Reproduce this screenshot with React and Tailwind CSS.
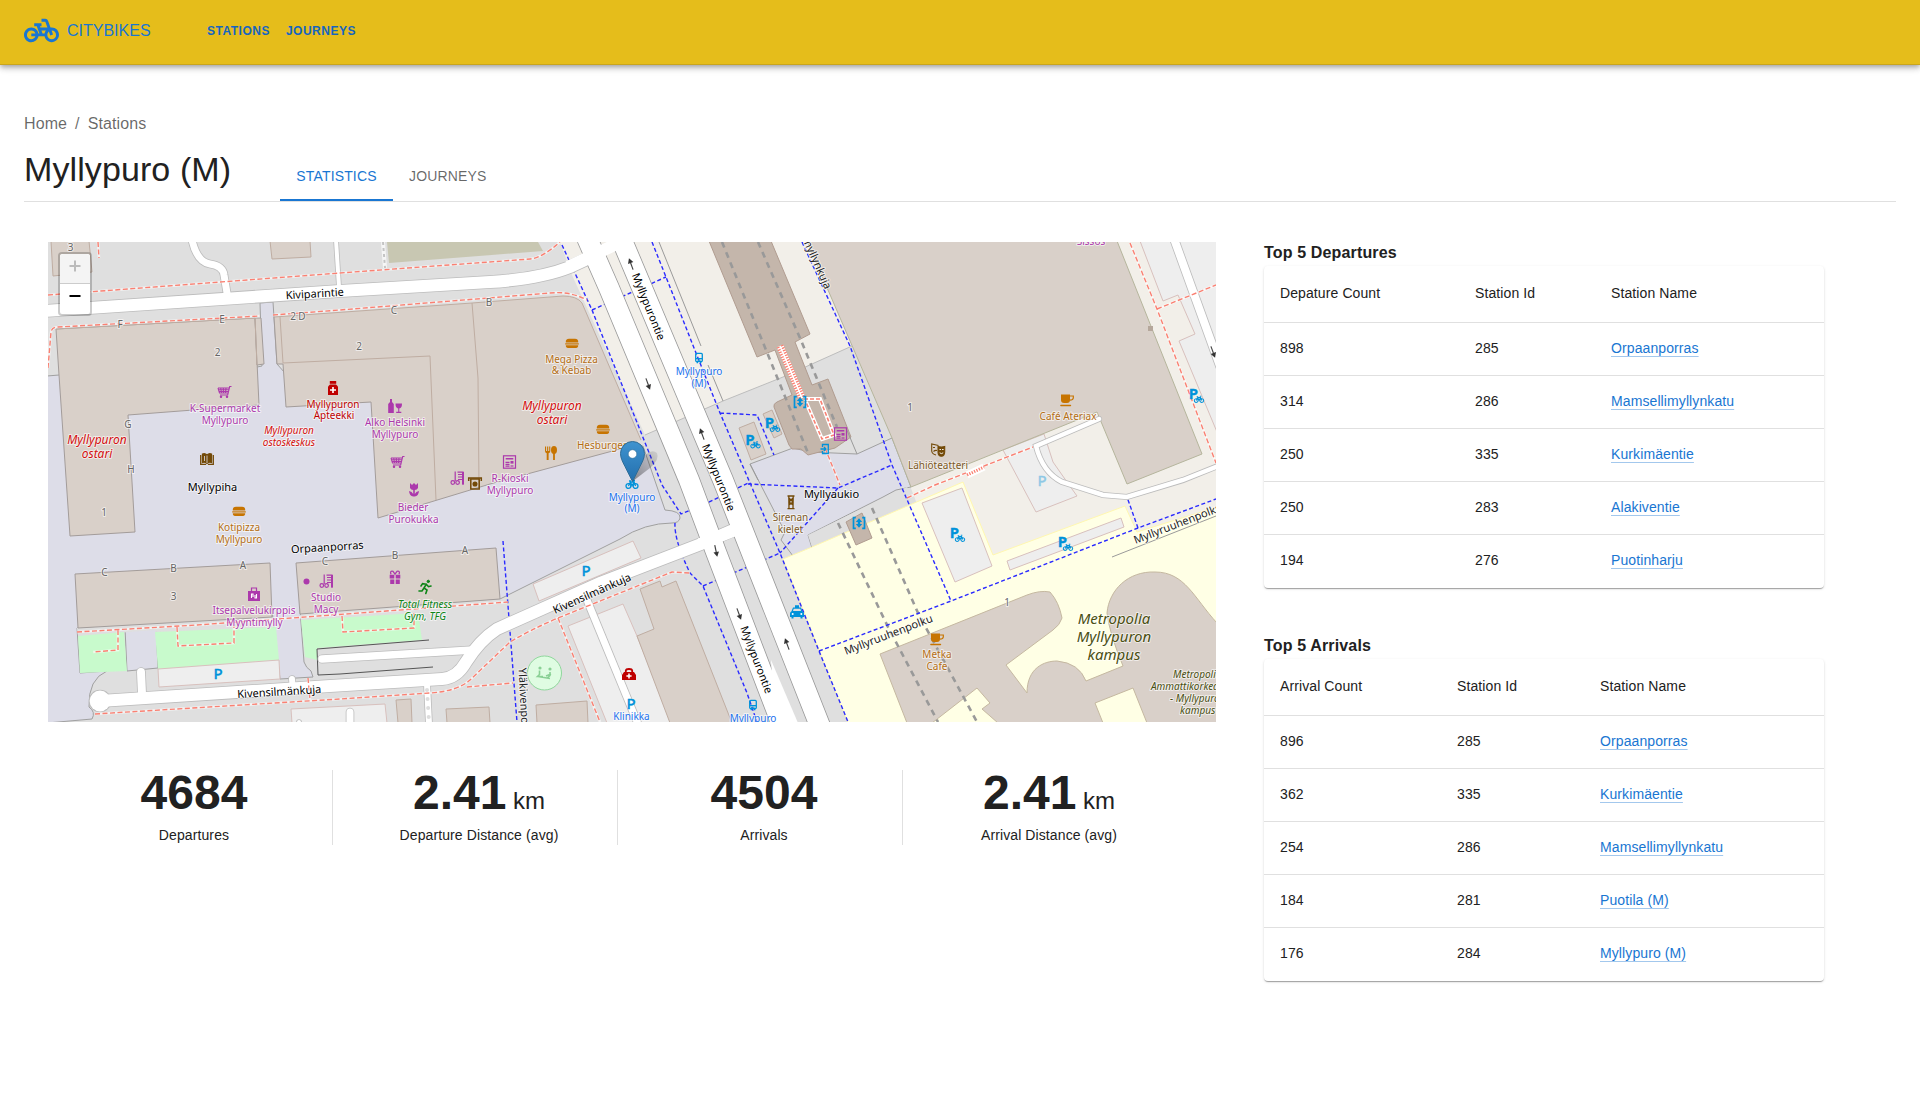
import React from "react";
import { MdPedalBike } from "react-icons/md";

const SHOP = "#ac39ac";
const FOOD = "#c77400";
const BROWN = "#734a08";
const TRANSIT = "#0092da";
const HEALTH = "#bf0000";

const departures = [
  [898, 285, "Orpaanporras"],
  [314, 286, "Mamsellimyllynkatu"],
  [250, 335, "Kurkimäentie"],
  [250, 283, "Alakiventie"],
  [194, 276, "Puotinharju"],
];

const arrivals = [
  [896, 285, "Orpaanporras"],
  [362, 335, "Kurkimäentie"],
  [254, 286, "Mamsellimyllynkatu"],
  [184, 281, "Puotila (M)"],
  [176, 284, "Myllypuro (M)"],
];

const stats = [
  ["4684", "", "Departures"],
  ["2.41", "km", "Departure Distance (avg)"],
  ["4504", "", "Arrivals"],
  ["2.41", "km", "Arrival Distance (avg)"],
];

/* Glyphs are drawn around 0,0 in a box of about 14 by 14 units. */
const glyphs = {
  cart: (
    <g fill="none" stroke="currentColor" strokeWidth="1.1">
      <path d="M7 -5.5H5.2L3.2 3H-4.5M-6.5 -4L-5 1H3.8M-6.5 -4H5M-6 -2.2H4.5M-5.5 -.5H4M-3.8 -4L-3 1M-1.2 -4L-1 1M1.5 -4L1 1" />
      <circle cx="-3.5" cy="4.8" r=".7" fill="currentColor" />
      <circle cx="2.5" cy="4.8" r=".7" fill="currentColor" />
    </g>
  ),
  burger: (
    <g fill="currentColor">
      <path d="M-6.2 -1Q-6.5 -4.7 -3 -4.7H3Q6.5 -4.7 6.2 -1Z" />
      <rect x="-6.8" y="-.2" width="13.6" height="1.2" />
      <path d="M-6.2 1.8H6.2Q6.2 4.5 4 4.5H-4Q-6.2 4.5 -6.2 1.8Z" />
    </g>
  ),
  cup: (
    <g fill="currentColor">
      <path d="M-6 -5.5H3V0Q3 3 0 3H-3Q-6 3 -6 0Z" />
      <path d="M3 -4H6.3V-2Q6 .2 3 .2" fill="none" stroke="currentColor" strokeWidth="1.2" />
      <rect x="-6.8" y="4.8" width="11" height="1.5" rx=".7" />
    </g>
  ),
  pharmacy: (
    <g fill="currentColor">
      <rect x="-3.2" y="-7" width="6.4" height="2.8" />
      <path d="M-3 -3.6H3L5 -1.5V7H-5V-1.5Z" />
      <path d="M-3 2H3M0 -1V5" stroke="#fff" strokeWidth="1.6" />
    </g>
  ),
  bag: (
    <g fill="currentColor">
      <path d="M-2.5 -2V-6H2.5V-2" fill="none" stroke="currentColor" strokeWidth="1.2" />
      <rect x="-6" y="-3" width="12" height="10" />
      <path d="M-2.5 4V0H-1V3M2.5 0V4H1V1" stroke="#fff" strokeWidth="1.1" fill="none" />
    </g>
  ),
  clinic: (
    <g fill="currentColor">
      <path d="M-3.2 -2V-3.3Q-3 -5 0 -5T3.2 -3.3V-2" fill="none" stroke="currentColor" strokeWidth="1.8" />
      <path d="M-5 -2H5L7 1V6H-7V1Z" />
      <path d="M-2.6 2H2.6M0 -.6V4.6" stroke="#fff" strokeWidth="1.5" />
    </g>
  ),
  wine: (
    <g fill="currentColor">
      <path d="M-5 -7H-3V-4L-1.2 -2V7H-6.8V-2L-5 -4Z" />
      <path d="M.5 -2.5H7Q7 2 4.3 2.5V5.7H6.3V7H1.2V5.7H3.2V2.5Q.5 2 .5 -2.5Z" />
    </g>
  ),
  book: (
    <g fill="none" stroke="currentColor" strokeWidth="1.3">
      <path d="M0 -4Q-2 -6 -4.5 -5V3.5Q-2 2.5 0 4.5Q2 2.5 4.5 3.5V-5Q2 -6 0 -4Z" fill="currentColor" />
      <path d="M0 -3.5V4.2M-2.5 -3V2" stroke="#dddde8" strokeWidth=".8" />
      <path d="M-6.3 -4V5.4H-1M6.3 -4V5.4H1" />
    </g>
  ),
  paper: (
    <g fill="none" stroke="currentColor" strokeWidth="1.2">
      <rect x="-6" y="-6.2" width="12" height="12.4" />
      <rect x="-3.8" y="-4" width="7.6" height="1.5" fill="currentColor" stroke="none" />
      <path d="M-4 .3H0M-4 2.3H0M-4 4.2H0" />
      <rect x="1" y="-1" width="3" height="2.6" fill="currentColor" stroke="none" />
      <path d="M1 4H4" />
    </g>
  ),
  scissors: (
    <g fill="none" stroke="currentColor" strokeWidth="1.2">
      <path d="M-1.8 -6.5V3M.5 -5.9H6V6.5M1 -3.5H6M1 -1H6M1 1.5H6" />
      <path d="M6 -6V6.5" strokeWidth="2" />
      <circle cx="-4.2" cy="4.5" r="1.8" />
      <circle cx=".6" cy="4.5" r="1.8" />
    </g>
  ),
  food: (
    <g fill="currentColor">
      <path d="M-6 -6.5V-2Q-6 0 -4.3 .3V7H-2.4V.3Q-.7 0 -.7 -2V-6.5H-1.8V-2H-2.8V-6.5H-3.9V-2H-4.9V-6.5Z" />
      <ellipse cx="3" cy="-3" rx="3" ry="4" />
      <rect x="2.1" y="0" width="1.8" height="7" />
    </g>
  ),
  flower: (
    <g fill="currentColor">
      <path d="M-4 -7L-2 -5L0 -7L2 -5L4 -7V-2Q3 0 .8 0V4Q2 1.5 5 1Q4.5 6 .8 6.5H-.8Q-4.5 6 -5 1Q-2 1.5 -.8 4V0Q-3 0 -4 -2Z" />
    </g>
  ),
  gift: (
    <g fill="currentColor">
      <path d="M-4 -3.2Q-5.5 -6.8 -2 -6.2L0 -3.4L2 -6.2Q5.5 -6.8 4 -3.2" fill="none" stroke="currentColor" strokeWidth="1.3" />
      <path d="M-5.3 -2.8H-.7V1H-5.3ZM.7 -2.8H5.3V1H.7ZM-4.8 2H-.7V6.6H-4.8ZM.7 2H4.8V6.6H.7Z" />
    </g>
  ),
  runner: (
    <g fill="none" stroke="currentColor" strokeWidth="2" strokeLinecap="round">
      <circle cx="3.3" cy="-5.6" r="1.2" fill="currentColor" strokeWidth="1" />
      <path d="M1.3 -2.8L-1 1L2 3L.8 6.5M-1 1L-3 4L-6 4M1.3 -2.8L-2.4 -3.4L-4 -1M1.5 -2.5L3.5 -.3L6 -1" strokeWidth="1.6" />
    </g>
  ),
  masks: (
    <g fill="none" stroke="currentColor" strokeWidth="1.1">
      <path d="M.5 -4.5L-6.3 -6V1Q-6 4 -2 5M-5 -2.5H-3M-4.5 1.5Q-3 0 -1 .5" />
      <path d="M0 -3.5Q3.5 -2.5 6.7 -3.5V2Q6.5 6 3.4 6.3Q0 6 0 2Z" fill="currentColor" />
      <path d="M1.5 -.5H3M4 -.5H5.6M1.7 2.8Q3.4 4.4 5.2 2.8" stroke="#fff" strokeWidth=".9" />
    </g>
  ),
  art: (
    <g fill="none" stroke="currentColor" strokeWidth="1.3">
      <path d="M-3.5 -6H3.5M-3.5 6.6H3.5M-2.2 -5.5L-2 6M2.2 -5.5L2 6M-2 -4L2 0L-2 3M2 -4L-2 0L2 3" />
    </g>
  ),
  atm: (
    <g fill="none" stroke="currentColor" strokeWidth="1.5">
      <path d="M-6.3 -2V-5H6.3V-2" />
      <rect x="-4.2" y="-4" width="8.4" height="10" />
      <circle cx="0" cy="1" r="1.8" fill="currentColor" />
    </g>
  ),
  bus: (
    <g fill="none" stroke="currentColor" strokeWidth="1.3">
      <rect x="-3.3" y="-4.6" width="6.6" height="8.2" rx="1" />
      <path d="M-3 .6H3M-2.4 4.6H-1M2.4 4.6H1" />
      <path d="M-1.6 2.2H1.6" strokeWidth="1" />
    </g>
  ),
  lift: (
    <g fill="none" stroke="currentColor" strokeWidth="1.7">
      <path d="M-3.2 -5.3H-5.5V5.3H-3.2M3.2 -5.3H5.5V5.3H3.2" />
      <path d="M0 -4.8L3.2 -1H1.2V1H3.2L0 4.8L-3.2 1H-1.2V-1H-3.2Z" fill="currentColor" stroke="none" />
    </g>
  ),
  entrance: (
    <g fill="none" stroke="currentColor" strokeWidth="1.3">
      <path d="M-2.5 -2V-4.5H3.3V4.5H-2.5V2M-4.5 0H1M-1 -2L1 0L-1 2" />
    </g>
  ),
  taxi: (
    <g fill="currentColor">
      <path d="M-2 -6.8H2V-4.6H4L5.5 -.7Q7 0 7 1.5V5H5.5V6.4H3.5V5H-3.5V6.4H-5.5V5H-7V1.5Q-7 0 -5.5 -.7L-4 -4.6H-2Z" />
      <path d="M-3.3 -3.2H3.3L4 -1H-4Z" fill="#dfdfdf" />
      <circle cx="-4.3" cy="2" r="1" fill="#fff" />
      <circle cx="4.3" cy="2" r="1" fill="#fff" />
    </g>
  ),
  bikes: (
    <g fill="none" stroke="currentColor" strokeWidth="1.3">
      <circle cx="-3.6" cy="2" r="2.4" />
      <circle cx="3.6" cy="2" r="2.4" />
      <path d="M-3.6 2L-1.5 -2H2L3.6 2M-1.5 -2L0 2L2 -2M-3 -3H-1M1 -3.5H3" />
    </g>
  ),
  dot: <circle r="3" fill="currentColor" />,
};

const pois = [
  ["cart", 224.5, 392, SHOP], ["pharmacy", 333, 388, HEALTH], ["book", 207, 459, BROWN],
  ["burger", 572, 343.5, FOOD], ["burger", 603, 429.5, FOOD], ["burger", 239, 511.5, FOOD],
  ["wine", 395, 406, SHOP], ["cart", 397.5, 462, SHOP], ["food", 551, 453, FOOD],
  ["paper", 509.5, 462, SHOP], ["scissors", 457, 478, SHOP], ["atm", 475, 483, BROWN],
  ["flower", 414, 490, SHOP], ["bag", 254, 594, SHOP], ["dot", 306.5, 581.5, SHOP],
  ["scissors", 326, 581, SHOP], ["gift", 395, 577.5, SHOP], ["runner", 425, 587, "#0d8517"],
  ["bus", 699, 358, TRANSIT], ["lift", 800, 402, TRANSIT], ["lift", 859, 523, TRANSIT],
  ["entrance", 825, 449, TRANSIT], ["paper", 840.5, 434, SHOP], ["art", 791, 502, BROWN],
  ["masks", 938, 450, BROWN], ["cup", 1067, 400, FOOD], ["cup", 937, 639, FOOD],
  ["taxi", 797, 612, TRANSIT], ["clinic", 629, 674, HEALTH], ["bus", 753, 705, TRANSIT],
  ["bikes", 632, 484, TRANSIT],
];

/* text, x, baseline, colour, size, italic */
const labels = [
  ["K-Supermarket", 225, 412, SHOP], ["Myllypuro", 225, 424, SHOP],
  ["Myllypuron", 333, 407.5, HEALTH], ["Apteekki", 334, 419, HEALTH],
  ["Alko Helsinki", 395, 425.5, SHOP], ["Myllypuro", 395, 437.5, SHOP],
  ["Mega Pizza", 571.5, 362.5, "#b46e14"], ["& Kebab", 571.5, 374, "#b46e14"],
  ["Hesburger", 602, 448.5, "#b46e14"],
  ["R-Kioski", 510, 481.5, SHOP], ["Myllypuro", 510, 493.5, SHOP],
  ["Bieder", 413, 510.5, SHOP], ["Purokukka", 413.5, 522.5, SHOP],
  ["Kotipizza", 239, 530.5, "#b46e14"], ["Myllypuro", 239, 542.5, "#b46e14"],
  ["Itsepalvelukirppis", 254, 613.5, SHOP], ["Myyntimylly", 254.5, 625.5, SHOP],
  ["Studio", 326, 601, SHOP], ["Macy", 326, 613, SHOP],
  ["Total Fitness", 425, 607.5, "#0d8517", 10, true], ["Gym, TFG", 425, 619.5, "#0d8517", 10, true],
  ["Myllypuron", 97, 443.5, "#d40f0f", 12, true], ["ostari", 97, 458, "#d40f0f", 12, true],
  ["Myllypuron", 552, 409.5, "#d40f0f", 12, true], ["ostari", 552, 424, "#d40f0f", 12, true],
  ["Myllypuron", 289, 434, "#d40f0f", 10, true], ["ostoskeskus", 289, 446, "#d40f0f", 10, true],
  ["Myllypuro", 699, 374.5, "#1c72ee"], ["(M)", 699, 386.5, "#1c72ee"],
  ["Myllypuro", 632, 500.5, "#1c72ee"], ["(M)", 632, 512, "#1c72ee"],
  ["Myllypuro", 753, 722, "#1c72ee"], ["Klinikka", 631.5, 720, "#1c72ee"],
  ["Sirenan", 790.5, 521, "#7d5a1f"], ["kielet", 790.5, 533, "#7d5a1f"],
  ["Lähiöteatteri", 938, 469, "#7d5a1f"],
  ["Café Ateriax", 1068, 419.5, "#b46e14"],
  ["Metka", 937, 657.5, "#b46e14"], ["Cafe", 937, 669.5, "#b46e14"],
  ["Sissos", 1091, 245, SHOP],
  ["Metropolia", 1114, 623.5, "#4a4f12", 15, true], ["Myllypuron", 1114, 641.5, "#4a4f12", 15, true],
  ["kampus", 1114, 659.5, "#4a4f12", 15, true],
  ["Myllypiha", 212.5, 491, "#000", 11], ["Myllyaukio", 831.5, 497.5, "#000", 11],
];

const houseMarks = [
  ["3", 70.5, 251], ["F", 120, 328], ["E", 222, 323], ["2", 217.5, 356], ["2", 293, 319.5],
  ["D", 302, 319.5], ["C", 394, 313.5], ["B", 489, 305.5], ["2", 359, 350], ["G", 128, 427.5],
  ["H", 131, 473], ["1", 104, 515.5], ["C", 104.5, 576], ["B", 173.5, 572], ["A", 243, 568.5],
  ["3", 173.5, 599.5], ["C", 325, 565], ["B", 395, 558.5], ["A", 465, 553.5], ["1", 910, 411],
  ["1", 1007, 606],
];

const BUILDING = "fill-[#d9d0c9] stroke-[#bfada2] stroke-1";
const BLOCK = "fill-[#d9d0c9] stroke-[#a39c9a] stroke-1";
const STATION = "fill-[#c4b6ab] stroke-[#b09c90] stroke-1";
const LOT = "fill-[#eeeeee] stroke-[#d8c0bd] stroke-1";
const GRASS = "fill-[#c8facc]";
const LAND = "fill-[#f2efe9]";
const PLAZA = "fill-[#dddde8] stroke-[#a0a0a0] stroke-1";

const shapes = [
  [LAND, "M560 242H810L852 346L783 377L723 401L645 435L572 275Z"],
  [LAND, "M806 242H1216V560H960L923 520L892 438Z"],
  [PLAZA, "M47 376L59 375L100 400L262 366L260 303L273 302L277 364L300 390L440 390L450 470L620 449L643 446L665 510Q681 511 680 518Q679 523 672 523Q645 523 620 539L500 599L300 610L304 662Q306 668 311 671L313 677L280 679L272 610L156 625L158 668L127 671L125 628L77 628L80 673L107 671Q88 679 89 707Q96 712 92 719L47 723Z"],
  ["fill-[#dfdfdf]", "M77 628L272 617L275 626L155 632V630L78 636ZM300 615L500 599L510 640L422 640L418 613L301 620Z"],
  ["fill-none stroke-[#bdbdbd] stroke-1", "M645 435L723 401L783 377L852 346"],
  [PLAZA, "M750 464L793 448L810 452L857 454L892 438L911 487L896 490L883 497L808 535L812 548L793 556L781 540L785 532Z"],
  ["fill-[#dfdfdf]", "M808 535L896 492L907 487L915 500L812 547Z"],
  ["fill-[#ffffe5] stroke-[#fff7b0] stroke-1", "M783 559L812 547L963 482L993 555L1125 506L1137 532L1217 507V723H848Z"],
  ["fill-[#c8c7b2]", "M387 242L389 263L543 251L538 242Z"],
  [GRASS, "M78 636L124 632L127 671L80 673ZM155 632L276 627L279 660L158 669ZM301 620L418 613L422 640L317 648V660L305 657Z"],
  [LOT, "M158 669L279 660L280 679L159 687ZM533 584L633 541L641 558L539 601ZM568 626L623 604L637 636L672 723H607ZM291 709L385 704L387 723H292Z"],
  [LOT, "M922 503L962 488L992 566L955 582ZM1007 561L1121 518L1124 527L1010 570ZM1003 450L1044 434L1053 462L1067 482L1077 496L1036 512ZM1140 241L1163 301L1178 295L1195 334L1179 341L1217 432V241Z"],
  [BLOCK, "M56 329L255 318L259 405L128 415L135 532L70 536L59 375Z"],
  [BLOCK, "M255 318L261 318L264 364L257 365Z"],
  ["fill-[#d9d0c9]", "M274 317L472 303L563 296Q577 296 582 303L641 440L620 449L490 484L378 518L371 402L286 407L283 364L277 364Z"],
  ["fill-none stroke-[#bfada2] stroke-1", "M274 317L472 303L563 296Q577 296 582 303L641 440M280 317L283 363L430 356L436 500M472 303L478 378L479 487M56 329L255 318L257 365"],
  ["fill-none stroke-[#a39c9a] stroke-1", "M274 317L277 364L283 364L286 407L371 402L378 518L490 484L620 449"],
  [BLOCK, "M75 574L270 563L272 617L78 628ZM296 563L496 548L500 599L300 614Z"],
  [BUILDING, "M51 241L53 276L92 272L89 241ZM270 241L272 259L311 257L310 241ZM640 589L660 581L662 587L676 581L732 723H670L637 636L654 629ZM396 700L411 699L412 723H398ZM446 709L489 707L490 723H447ZM536 705L587 701L588 723H537Z"],
  ["fill-[#d9d0c9] stroke-[#b5b59c] stroke-1", "M807 241L828 290L892 438L911 487L1097 412L1127 484L1202 454L1117 241Z"],
  ["fill-[#d9d0c9] stroke-[#c5b8a0] stroke-1", "M880 654L910 642L1027 595Q1040 590 1050 592Q1059 602 1062 618Q1060 625 1053 630L1006 665L1027 693C1027 668 1044 661 1057 661Q1079 663 1086 681L1123 666Q1109 632 1107 613C1109 590 1128 571 1155 572C1185 572 1194 598 1217 623V723H1147L1133 688L1095 703L1103 723H998L982 709L990 703L977 688L932 723H907Z"],
  [STATION, "M709 241L757 357L775 350L792 395L777 402Q773 404 774 407L789 445L792 449H801L808 455L835 448L851 437L828 379L812 385L795 342L810 334L771 241ZM846 522L862 513L872 538L856 545Z"],
  [BUILDING, "M739 428L754 422L766 454L751 460ZM763 414L772 410L782 434L774 438Z"],
  ["fill-none stroke-[#9a9a9a] stroke-1", "M659 242L701 346M708 365L723 401M1112 557L1216 516M857 454L846 428M750 464L758 480"],
  ["fill-none stroke-[#555] stroke-1", "M429 640L317 649L318 675L340 674L433 667"],
  ["fill-[#b5a79b]", "M1148 326H1153V331H1148Z"],
];

const minorRoads = [
  [7, "M192 240Q197 262 210 264Q223 266 224 275L227 293"], [4, "M336 240L339 287"],
  [8, "M1173 236L1220 366"], [4.5, "M1099 419L1036 446C1040 462 1048 475 1062 482L1103 495L1127 497L1183 480L1218 466"],
  [7, "M587 600L638 724"], [8, "M141 672L142 694"], [6, "M292 679L293 690"], [6, "M427 684L429 724"],
  [7, "M350 712V725"], [4, "M299 722V725"], [7.5, "M322 659L473 650"],
  [12, "M44 311L340 291L490 282Q540 279 570 267L600 253"],
  [12, "M100 701L330 686L442 679Q457 678 466 662Q480 640 497 629L600 583L701 544L738 528"],
];
const carriageways = ["M587 238L609 288L689 480L716 552L784 730", "M621 238L723 480L820 726"];

const redPaths =
  "M48 295L340 273L530 259Q542 258 560 242M48 368L51 332Q52 327 58 327L260 316M273 315L340 310L550 293Q570 291 587 300M98 242L99 258M77 632L197 625L508 602M118 630V650L93 652M177 627L178 646L234 643V626M342 616L343 632L414 628V613M95 714L340 699L430 693Q458 691 470 680L510 642Q530 630 558 618L672 572L690 573M467 687L513 683M558 618L600 722M308 678L310 700M1130 243L1157 309L1216 463M1157 309L1216 285M907 498L935 485L1033 447M825 448L840 485";
const bluePaths =
  "M562 245L592 310L630 405L662 485L681 514L707 503L748 483M675 523Q674 540 690 573L703 586L747 693L757 722M703 586L780 553M652 242L666 277L698 358L720 413L780 553L819 651L848 722M592 310L666 277M720 413L757 415L774 455M748 484L838 488L892 465M838 488L780 553M802 242L850 346L892 465L951 601M819 651L951 601L1138 528L1216 499M1138 528L1127 497M503 541L517 722";

function MapLabel({ text, x, y, color, size = 10, italic = false, rotate = 0, anchor = "middle" }) {
  return (
    <text
      x={x}
      y={y}
      fill={color}
      fontSize={size}
      fontStyle={italic ? "italic" : "normal"}
      textAnchor={anchor}
      transform={rotate ? `rotate(${rotate} ${x} ${y})` : undefined}
      className="stroke-white/60 stroke-2 [paint-order:stroke] [stroke-linejoin:round]"
    >
      {text}
    </text>
  );
}

function Parking({ x, y, size = 15, bike = false, faded = false }) {
  return (
    <g className={faded ? "opacity-40" : ""} color={TRANSIT}>
      <text x={x} y={y} fill={TRANSIT} fontSize={size} textAnchor="middle" className={bike ? "font-bold" : "font-medium"} stroke={TRANSIT} strokeWidth=".3">
        P
      </text>
      {bike && <g transform={`translate(${x + 5.5} ${y}) scale(.78)`}>{glyphs.bikes}</g>}
    </g>
  );
}

function StreetArrow({ x, y, rotate }) {
  return (
    <g transform={`translate(${x} ${y}) rotate(${rotate})`}>
      <path d="M0 6V-2" className="stroke-[#444] stroke-[1.2]" />
      <path d="M-2.8 -1L0 -6L2.8 -1Z" className="fill-[#333]" />
    </g>
  );
}

function StationMap() {
  return (
    <div className="relative h-[480px] w-[1168px] overflow-hidden bg-[#dfdfdf]">
      <svg viewBox="48 242 1168 480" className="block h-full w-full font-['Noto_Sans',sans-serif]">
        {shapes.map(([style, d], i) => (
          <path key={i} className={style} d={d} />
        ))}

        <g className="fill-none stroke-[#999] stroke-[2.6] [stroke-dasharray:6_5]">
          <path d="M722 242L808 453M838 523L888 627L938 722M758 242L800 338L837 427M872 508L918 613L977 722" />
        </g>
        <path d={bluePaths} className="fill-none stroke-[#2a2aff] stroke-[1.4] [stroke-dasharray:4_2.5]" />

        <path d="M383 242L385 268" className="fill-none stroke-white stroke-[4] opacity-70" />
        <path d="M383 242L385 268" className="fill-none stroke-[#c4c4c4] stroke-[2] [stroke-dasharray:3_3]" />

        <circle cx="100" cy="701" r="11.3" className="fill-[#bbb]" />
        <g className="fill-none stroke-[#bcbcbc]" strokeLinecap="round">
          {minorRoads.map(([w, d]) => (
            <path key={d} d={d} strokeWidth={w + 1.6} />
          ))}
        </g>
        <g className="fill-none stroke-[#999] stroke-[21.6]">
          {carriageways.map((d) => (
            <path key={d} d={d} />
          ))}
        </g>
        <g className="fill-none stroke-white" strokeLinecap="round">
          {minorRoads.map(([w, d]) => (
            <path key={d} d={d} strokeWidth={w} />
          ))}
        </g>
        <g className="fill-none stroke-white stroke-[20]">
          {carriageways.map((d) => (
            <path key={d} d={d} />
          ))}
        </g>
        <path d="M568 267L625 240M700 544L738 529" className="fill-none stroke-white stroke-[12]" />
        <circle cx="100" cy="701" r="10.4" className="fill-white" />
        <path d="M771 660L798 723H775Z" className="fill-white" />
        <path d="M427 690L429 722" className="fill-none stroke-[#ddd] stroke-[4] [stroke-dasharray:0_9] [stroke-linecap:round]" />

        <path d={redPaths} className="fill-none stroke-white/60 stroke-[2.6]" />
        <path d={redPaths} className="fill-none stroke-[#fa8072] stroke-[1.4] [stroke-dasharray:5_2.5]" />
        <path d="M780 346L802 398M967 475L984 467" className="fill-none stroke-white stroke-[7]" />
        <path d="M778 347L800 399M782 345L804 397M967 475L984 467" className="fill-none stroke-[#fa8072] stroke-[3] [stroke-dasharray:1.3_1.3]" />
        <path d="M804 399L820 399L834 435L822 439L806 402" className="fill-none stroke-white stroke-[4]" />
        <path d="M804 399L820 399L834 435L822 439L806 402" className="fill-none stroke-[#fa8072] stroke-[1.6] [stroke-dasharray:4_2]" />

        <circle cx="544.5" cy="673" r="17" className="fill-[#dffce2] stroke-[#8fd79c] stroke-1" />
        <g className="fill-none stroke-[#8ad095] stroke-[1.6]">
          <path d="M539.5 670.5V674.5L537.5 676.5H543M550 672V675.5L547.5 678M538 676.5L550 678.5M546 676L551 674" />
          <circle cx="540" cy="668" r=".8" />
          <circle cx="550" cy="669" r=".8" />
        </g>

        <StreetArrow x={631} y={264} rotate={-20} />
        <StreetArrow x={648} y={384} rotate={160} />
        <StreetArrow x={702} y={434} rotate={-20} />
        <StreetArrow x={716} y={551} rotate={168} />
        <StreetArrow x={739} y={614} rotate={160} />
        <StreetArrow x={787} y={644} rotate={-20} />
        <StreetArrow x={1213} y={352} rotate={160} />

        {houseMarks.map(([t, x, y], i) => (
          <MapLabel key={i} text={t} x={x} y={y} color="#666" />
        ))}
        {pois.map(([name, x, y, color], i) => (
          <g key={i} transform={`translate(${x} ${y})`} color={color}>
            {glyphs[name]}
          </g>
        ))}
        {labels.map(([t, x, y, color, size, italic], i) => (
          <MapLabel key={i} text={t} x={x} y={y} color={color} size={size} italic={italic} />
        ))}

        <MapLabel text="Kiviparintie" x={315} y={297.5} color="#000" size={11} rotate={-3.5} />
        <MapLabel text="Orpaanporras" x={327.5} y={551} color="#000" size={11} rotate={-3.5} />
        <MapLabel text="Kivensilmänkuja" x={279.5} y={695.5} color="#000" size={11} rotate={-3.5} />
        <MapLabel text="Kivensilmänkuja" x={593.5} y={597} color="#000" size={11} rotate={-24} />
        <MapLabel text="Myllypurontie" x={645} y={308} color="#000" size={11} rotate={68} />
        <MapLabel text="Myllypurontie" x={715} y={479} color="#000" size={11} rotate={68} />
        <MapLabel text="Myllypurontie" x={753} y={661} color="#000" size={11} rotate={69} />
        <MapLabel text="Mamsellimyllynkuja" x={825} y={290} color="#222" size={11} rotate={66} anchor="end" />
        <MapLabel text="Yläkivenpolku" x={518.5} y={668} color="#222" size={11} rotate={87} anchor="start" />
        <MapLabel text="Myllyruuhenpolku" x={846} y={655} color="#222" size={11} rotate={-21} anchor="start" />
        <MapLabel text="Myllyruuhenpolku" x={1135.5} y={544} color="#222" size={11} rotate={-21} anchor="start" />
        <MapLabel text="Metropolia" x={1173} y={678} color="#4a4f12" italic anchor="start" />
        <MapLabel text="Ammattikorkeakoulu" x={1151} y={690} color="#4a4f12" italic anchor="start" />
        <MapLabel text="- Myllypuron" x={1170} y={702} color="#4a4f12" italic anchor="start" />
        <MapLabel text="kampus" x={1180} y={713.5} color="#4a4f12" italic anchor="start" />

        <Parking x={218} y={679} />
        <Parking x={586} y={576} />
        <Parking x={631} y={709} />
        <Parking x={1042} y={486} faded />
        <Parking x={750} y={444.5} bike />
        <Parking x={769.5} y={428} bike />
        <Parking x={954.5} y={538} bike />
        <Parking x={1062.5} y={547} bike />
        <Parking x={1193.5} y={399} bike />

        <defs>
          <linearGradient id="pinFill" x1="0" y1="0" x2="0" y2="1">
            <stop offset="0" stopColor="#3f93cf" />
            <stop offset="1" stopColor="#236fae" />
          </linearGradient>
          <linearGradient id="pinShadow" x1="0" y1="1" x2="1" y2="0">
            <stop offset="0" stopColor="#000" stopOpacity=".4" />
            <stop offset="1" stopColor="#000" stopOpacity=".08" />
          </linearGradient>
        </defs>
        <path d="M633 481L640 462Q650 447 657 453Q660 459 650 468Z" fill="url(#pinShadow)" />
        <path
          d="M632.5 481.5L625 466.5C622.5 461.5 620.5 458 620.5 453.5A12 12 0 0 1 644.5 453.5C644.5 458 642.5 461.5 640 466.5Z"
          fill="url(#pinFill)"
          className="stroke-[#2e6c97] stroke-1"
        />
        <circle cx="632.5" cy="454" r="4.3" className="fill-white stroke-[#2e6c97] stroke-[.6]" />
      </svg>

      <div className="absolute left-[10px] top-[10px] w-[34px] rounded border-2 border-black/20 bg-white bg-clip-padding">
        <div className="flex h-[30px] items-center justify-center rounded-t-sm border-b border-[#ccc] bg-[#f4f4f4] pb-[5px]">
          <svg viewBox="0 0 12 12" className="h-3 w-3 stroke-[#bbb] stroke-2">
            <path d="M.5 6H11.5M6 .5V11.5" />
          </svg>
        </div>
        <div className="flex h-[30px] items-center justify-center pb-1">
          <svg viewBox="0 0 12 12" className="h-3 w-3 stroke-black stroke-2">
            <path d="M.5 5H11.5" />
          </svg>
        </div>
      </div>
    </div>
  );
}

function TopTable({ title, countLabel, rows, columns }) {
  return (
    <section>
      <h2 className="h-6 text-base font-bold leading-[22px] tracking-[0.00938em]">{title}</h2>
      <div className="h-[322px] w-[560px] rounded bg-white text-sm tracking-[0.1px] shadow-[0_2px_1px_-1px_rgba(0,0,0,0.2),0_1px_1px_0_rgba(0,0,0,0.14),0_1px_3px_0_rgba(0,0,0,0.12)]">
        <div className={`grid h-[57px] items-center border-b border-[#e0e0e0] pb-[3px] pl-4 ${columns}`}>
          <span>{countLabel}</span>
          <span>Station Id</span>
          <span>Station Name</span>
        </div>
        {rows.map(([count, id, name]) => (
          <div key={name} className={`grid h-[53px] items-center border-b border-[#e0e0e0] pb-0.5 pl-4 last:border-transparent ${columns}`}>
            <span>{count}</span>
            <span>{id}</span>
            <span>
              <a className="text-[#1976d2] underline decoration-[#1976d2]/40 decoration-1 underline-offset-[3px]">{name}</a>
            </span>
          </div>
        ))}
      </div>
    </section>
  );
}

export default function App() {
  return (
    <div className="min-h-[1098px] bg-white font-['Liberation_Sans',Arial,sans-serif] text-[#212121]">
      <header className="flex h-[65px] items-center border-b border-[#c9a51d] bg-[#e5bd1b] px-6 shadow-[0_2px_4px_-1px_rgba(0,0,0,0.2),0_4px_5px_0_rgba(0,0,0,0.14),0_1px_10px_0_rgba(0,0,0,0.12)]">
        <div className="flex w-[183px] items-center gap-2 pb-1 text-base text-[#1976d2]">
          <MdPedalBike size={35} />
          <span className="pt-0.5">CITYBIKES</span>
        </div>
        <nav className="flex gap-4 pb-[3px] text-xs font-bold tracking-[0.5px] text-[#1565c0]">
          <a>STATIONS</a>
          <a>JOURNEYS</a>
        </nav>
      </header>

      <main className="px-6 pt-[47px]">
        <nav className="flex h-6 text-base leading-6 tracking-[0.1px] text-black/60">
          <a>Home</a>
          <span className="mx-2">/</span>
          <a>Stations</a>
        </nav>

        <div className="mt-3 flex h-[54px] items-end border-b border-[#e0e0e0]">
          <h1 className="w-[256px] pb-[11px] text-[34px] leading-[42px] tracking-[0.1px]">Myllypuro (M)</h1>
          <div className="flex h-12 text-sm tracking-[0.15px]">
            <a className="flex w-[113px] items-center justify-center border-b-2 border-[#1976d2] text-[#1976d2]">STATISTICS</a>
            <a className="flex items-center px-4 pb-0.5 text-black/60">JOURNEYS</a>
          </div>
        </div>

        <div className="flex gap-12 pl-6 pt-10">
          <div className="w-[1168px]">
            <StationMap />
            <div className="mt-12 flex pr-7">
              {stats.map(([value, unit, label]) => (
                <div key={label} className="h-[75px] w-[285px] border-r border-[#e0e0e0] pl-2 text-center last:border-transparent">
                  <div className="h-[49px] whitespace-nowrap leading-[46px]">
                    <span className="text-5xl font-bold leading-[46px]">{value}</span>
                    {unit && <span className="text-2xl"> {unit}</span>}
                  </div>
                  <div className="pt-1.5 text-sm leading-5 tracking-[0.1px]">{label}</div>
                </div>
              ))}
            </div>
          </div>

          <div className="flex flex-col gap-[47px]">
            <TopTable title="Top 5 Departures" countLabel="Depature Count" rows={departures} columns="grid-cols-[195px_136px_1fr]" />
            <TopTable title="Top 5 Arrivals" countLabel="Arrival Count" rows={arrivals} columns="grid-cols-[177px_143px_1fr]" />
          </div>
        </div>
      </main>
    </div>
  );
}
